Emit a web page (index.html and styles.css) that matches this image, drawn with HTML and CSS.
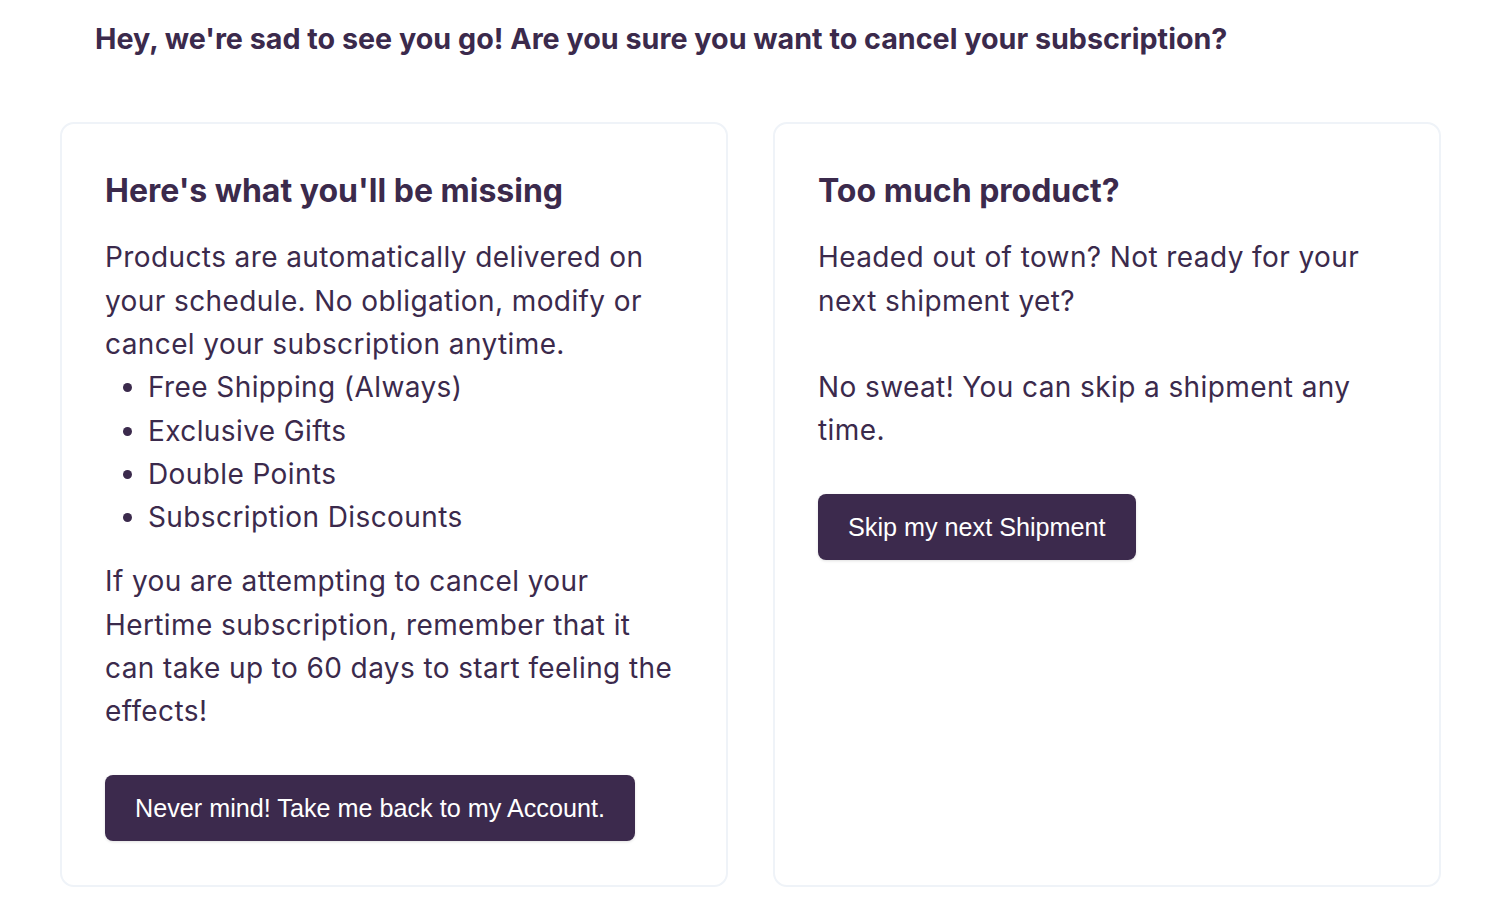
FILE: index.html
```html
<!DOCTYPE html>
<html lang="en">
  <head>
    <meta charset="UTF-8" />
    <title>Cancel Subscription</title>
    <link rel="stylesheet" href="styles.css">
  </head>
  <body>
    <h1 class="cancel-title">Hey, we're sad to see you go! Are you sure you want to cancel your subscription?</h1>

    <div class="cancel-options">
      <section class="card">
        <h2>Here's what you'll be missing</h2>
        <p class="lead">Products are automatically delivered on your schedule. No obligation, modify or cancel your subscription anytime.</p>
        <ul class="perks">
          <li>Free Shipping (Always)</li>
          <li>Exclusive Gifts</li>
          <li>Double Points</li>
          <li>Subscription Discounts</li>
        </ul>
        <p>If you are attempting to cancel your Hertime subscription, remember that it can take up to 60 days to start feeling the effects!</p>
        <a class="btn" href="#">Never mind! Take me back to my Account.</a>
      </section>

      <section class="card">
        <h2>Too much product?</h2>
        <p class="lead">Headed out of town? Not ready for your next shipment yet?</p>
        <p class="lead spaced">No sweat! You can skip a shipment any time.</p>
        <a class="btn" href="#">Skip my next Shipment</a>
      </section>
    </div>
  </body>
</html>
```

FILE: styles.css
```css
body {
  font-family: Inter, "Noto Sans", sans-serif;
  margin: 0;
  background: #fff;
  color: #3b2a4c;
}

.cancel-title {
  font-size: 28.7px;
  font-weight: 700;
  line-height: 1.3;
  margin: 0;
  padding: 20px 0 0 95px;
}

.cancel-options {
  display: grid;
  grid-template-columns: 1fr 1fr;
  gap: 45px;
  padding: 65px 55px 11px 60px;
  align-items: stretch;
}

.card {
  border: 2px solid #eff3f8;
  border-radius: 14px;
  padding: 46px 43px 44px;
  display: flex;
  flex-direction: column;
  align-items: flex-start;
}

.card h2 {
  font-size: 32px;
  font-weight: 700;
  line-height: 42px;
  margin: 0 0 24px;
}

.card p,
.perks {
  font-size: 28px;
  letter-spacing: 0.4px;
  line-height: 43.3px;
}

.card p {
  margin: 21px 0 0;
}

.card p.lead {
  margin-top: 0;
}

.card p.spaced {
  margin-top: 43px;
}

.perks {
  margin: 0;
  padding-left: 43px;
}

.btn {
  margin-top: 41px;
  display: inline-block;
  font-family: "Liberation Sans", Arial, sans-serif;
  font-size: 25.2px;
  line-height: 66px;
  padding: 0 30px;
  background-color: #3c2a4d;
  color: #fff;
  text-decoration: none;
  border-radius: 8px;
  box-shadow: 0 1px 3px rgba(0, 0, 0, 0.12);
}
```
